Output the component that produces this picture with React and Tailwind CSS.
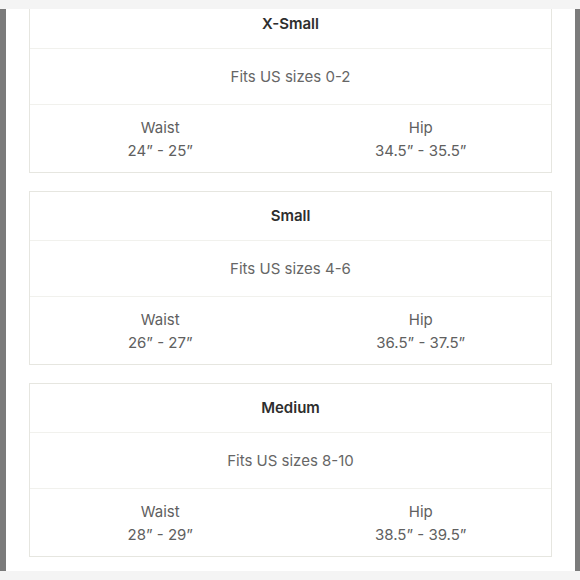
export default function App() {
  const cards = [
    { name: "X-Small", fits: "Fits US sizes 0-2", waist: "24\u201d - 25\u201d", hip: "34.5\u201d - 35.5\u201d" },
    { name: "Small", fits: "Fits US sizes 4-6", waist: "26\u201d - 27\u201d", hip: "36.5\u201d - 37.5\u201d" },
    { name: "Medium", fits: "Fits US sizes 8-10", waist: "28\u201d - 29\u201d", hip: "38.5\u201d - 39.5\u201d" },
  ];
  return (
    <div className="w-[580px] h-[580px] bg-[#f5f5f5] flex flex-col" style={{ fontFamily: "Inter, 'Liberation Sans', sans-serif" }}>
      <div className="h-[9px] bg-[#f4f4f4]" />
      <div className="flex h-[562px]">
        <div className="w-[6px] bg-[#7b7b7b]" />
        <div className="flex-1 bg-white overflow-hidden px-[23px]">
          <div className="-mt-[10px] flex flex-col gap-[18px]">
            {cards.map((c) => (
              <div key={c.name} className="border border-[#e6e6e0] flex flex-col">
                <div className="h-[48px] flex items-center justify-center text-[15px] font-semibold text-[#2e2e2e]">{c.name}</div>
                <div className="h-px bg-[#f1f1ed]" />
                <div className="h-[55px] flex items-center justify-center text-[15px] text-[#666] pt-[1px]">{c.fits}</div>
                <div className="h-px bg-[#f1f1ed]" />
                <div className="h-[67px] grid grid-cols-2 items-center text-[15px] text-[#606060] leading-[23px] pt-[1px]">
                  <div className="flex flex-col items-center">
                    <span>Waist</span>
                    <span>{c.waist}</span>
                  </div>
                  <div className="flex flex-col items-center">
                    <span>Hip</span>
                    <span>{c.hip}</span>
                  </div>
                </div>
              </div>
            ))}
          </div>
        </div>
        <div className="w-[5px] bg-[#7b7b7b]" />
      </div>
      <div className="h-[9px] bg-[#f4f4f4]" />
    </div>
  );
}
